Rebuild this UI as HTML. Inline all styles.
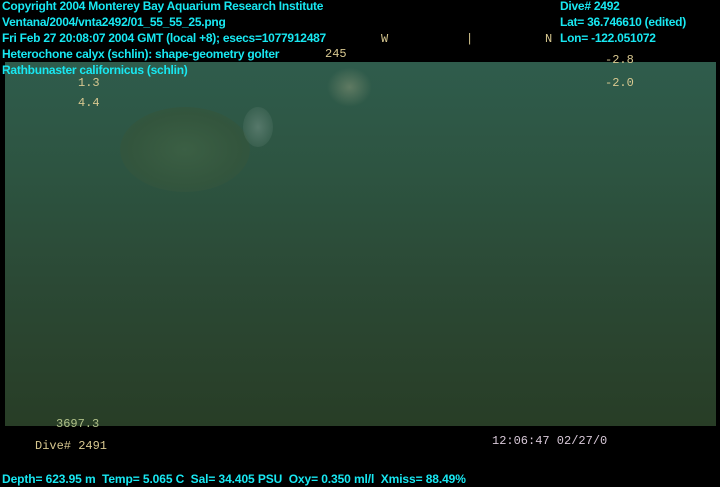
<!DOCTYPE html><html><head><style>
body{margin:0;width:720px;height:486px;background:#000;position:relative;overflow:hidden;font-family:"Liberation Sans",sans-serif}
.img{position:absolute;left:5px;top:62px;width:711px;height:364px;background:linear-gradient(180deg,#2f5c4c 0%,#2d5441 30%,#2b4935 60%,#283d26 100%)}
.t{position:absolute;color:#18e8f2;font-size:12px;font-weight:bold;letter-spacing:-0.25px;white-space:nowrap;line-height:16px}
.o{position:absolute;font-family:"Liberation Mono",monospace;font-size:12px;white-space:nowrap;color:#d8c890}
</style></head><body>
<div class="img">
<div style="position:absolute;left:115px;top:45px;width:130px;height:85px;border-radius:50%;background:radial-gradient(ellipse,#3b5f44 0%,#33553d 60%,rgba(40,70,50,0) 100%)"></div>
<div style="position:absolute;left:238px;top:45px;width:30px;height:40px;border-radius:50%;background:radial-gradient(ellipse,#56786a,rgba(60,90,70,0))"></div>
<div style="position:absolute;left:322px;top:5px;width:45px;height:40px;border-radius:50%;background:radial-gradient(ellipse,#5f7a62,rgba(60,90,70,0) 70%)"></div>
</div>
<div class="t" style="left:2px;top:-2px">Copyright 2004 Monterey Bay Aquarium Research Institute</div>
<div class="t" style="left:2px;top:14px">Ventana/2004/vnta2492/01_55_55_25.png</div>
<div class="t" style="left:2px;top:30px">Fri Feb 27 20:08:07 2004 GMT (local +8); esecs=1077912487</div>
<div class="t" style="left:2px;top:46px">Heterochone calyx (schlin): shape-geometry golter</div>
<div class="t" style="left:2px;top:62px">Rathbunaster californicus (schlin)</div>
<div class="t" style="left:560px;top:-2px">Dive# 2492</div>
<div class="t" style="left:560px;top:14px">Lat= 36.746610 (edited)</div>
<div class="t" style="left:560px;top:30px">Lon= -122.051072</div>
<div class="o" style="left:325px;top:47px">245</div>
<div class="o" style="left:381px;top:32px">W</div>
<div class="o" style="left:466px;top:32px">|</div>
<div class="o" style="left:545px;top:32px">N</div>
<div class="o" style="left:78px;top:76px">1.3</div>
<div class="o" style="left:78px;top:96px">4.4</div>
<div class="o" style="left:605px;top:53px">-2.8</div>
<div class="o" style="left:605px;top:76px">-2.0</div>
<div class="o" style="left:56px;top:417px;color:#b0c088">3697.3</div>
<div class="o" style="left:35px;top:439px">Dive# 2491</div>
<div class="o" style="left:492px;top:434px;color:#d8c8d8">12:06:47 02/27/0</div>
<div class="t" style="left:2px;top:471px;letter-spacing:-0.1px">Depth= 623.95 m&nbsp; Temp= 5.065 C&nbsp; Sal= 34.405 PSU&nbsp; Oxy= 0.350 ml/l&nbsp; Xmiss= 88.49%</div>
</body></html>
